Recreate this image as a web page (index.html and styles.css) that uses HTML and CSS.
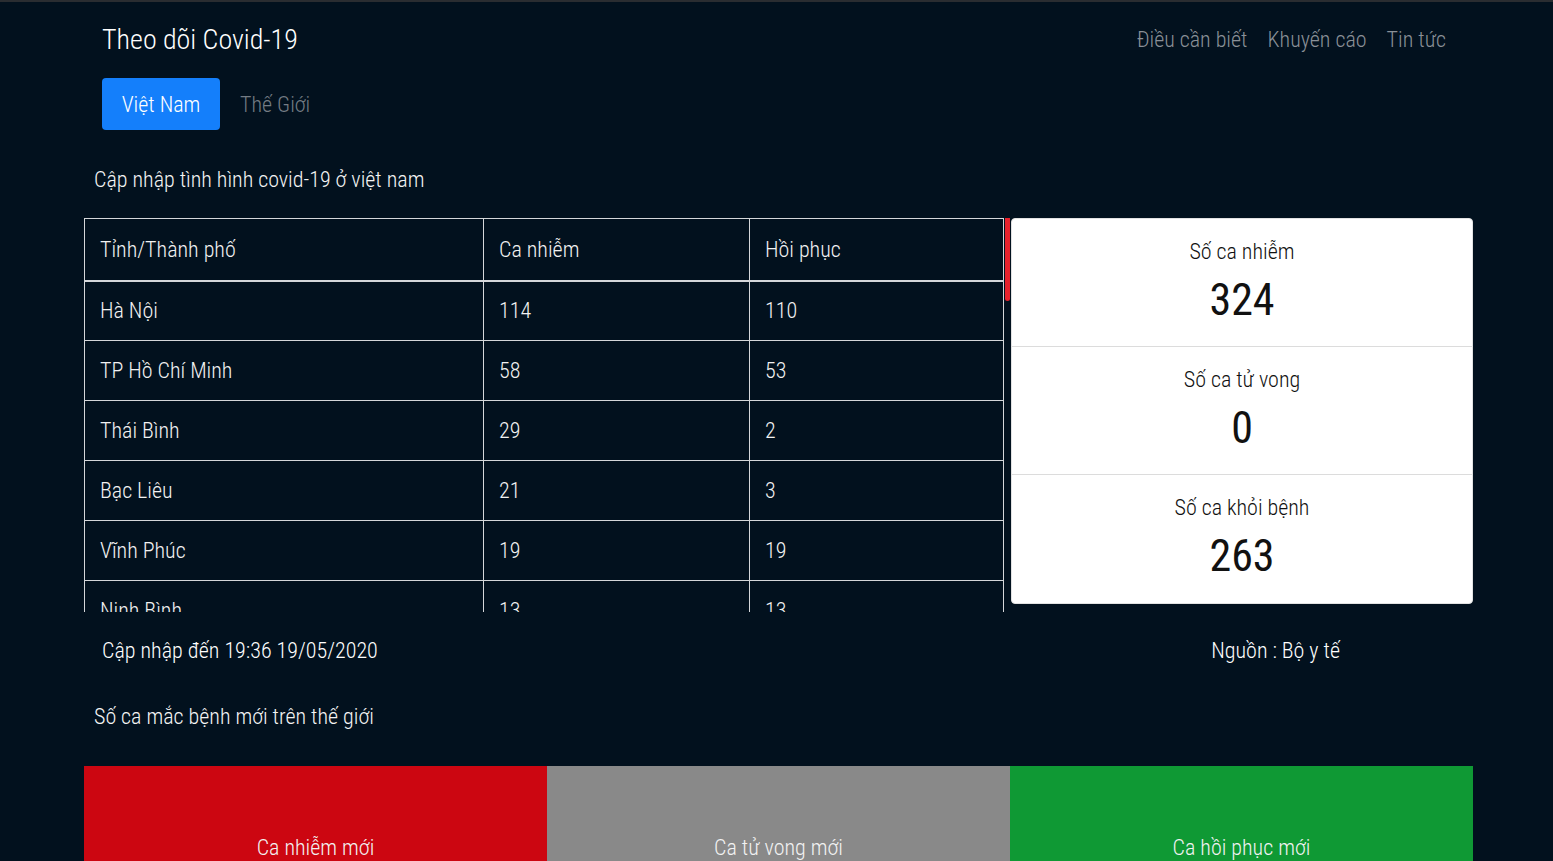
FILE: index.html
```html
<!DOCTYPE html>
<html lang="vi">
<head>
<meta charset="utf-8">
<title>Theo dõi Covid-19</title>
<link rel="stylesheet" href="styles.css">
</head>
<body>
<div class="topline"></div>
<div class="page">
  <header class="header">
    <div class="brand">Theo dõi Covid-19</div>
    <nav class="nav">
      <a class="nav-link" href="#">Điều cần biết</a>
      <a class="nav-link" href="#">Khuyến cáo</a>
      <a class="nav-link" href="#">Tin tức</a>
    </nav>
  </header>

  <div class="tabs">
    <a class="tab active" href="#">Việt Nam</a>
    <a class="tab" href="#">Thế Giới</a>
  </div>

  <h2 class="section-title">Cập nhập tình hình covid-19 ở việt nam</h2>

  <div class="row">
    <div class="table-col">
      <div class="table-wrap">
        <table class="cases">
          <thead>
            <tr><th class="c1">Tỉnh/Thành phố</th><th class="c2">Ca nhiễm</th><th class="c3">Hồi phục</th></tr>
          </thead>
          <tbody>
            <tr><td>Hà Nội</td><td>114</td><td>110</td></tr>
            <tr><td>TP Hồ Chí Minh</td><td>58</td><td>53</td></tr>
            <tr><td>Thái Bình</td><td>29</td><td>2</td></tr>
            <tr><td>Bạc Liêu</td><td>21</td><td>3</td></tr>
            <tr><td>Vĩnh Phúc</td><td>19</td><td>19</td></tr>
            <tr><td>Ninh Bình</td><td>13</td><td>13</td></tr>
            <tr><td>Bình Thuận</td><td>9</td><td>9</td></tr>
            <tr><td>Quảng Ninh</td><td>5</td><td>5</td></tr>
            <tr><td>Đà Nẵng</td><td>6</td><td>6</td></tr>
            <tr><td>Hà Nam</td><td>4</td><td>4</td></tr>
            <tr><td>Hà Tĩnh</td><td>4</td><td>4</td></tr>
            <tr><td>Đồng Tháp</td><td>3</td><td>3</td></tr>
            <tr><td>Thanh Hóa</td><td>3</td><td>3</td></tr>
            <tr><td>Quảng Nam</td><td>3</td><td>3</td></tr>
            <tr><td>Tây Ninh</td><td>2</td><td>2</td></tr>
            <tr><td>Ninh Thuận</td><td>2</td><td>2</td></tr>
            <tr><td>Lào Cai</td><td>2</td><td>2</td></tr>
            <tr><td>Khánh Hòa</td><td>2</td><td>2</td></tr>
            <tr><td>Bắc Giang</td><td>2</td><td>2</td></tr>
            <tr><td>Hải Dương</td><td>2</td><td>2</td></tr>
            <tr><td>Cần Thơ</td><td>2</td><td>2</td></tr>
            <tr><td>Hà Giang</td><td>1</td><td>1</td></tr>
            <tr><td>Thừa Thiên Huế</td><td>1</td><td>1</td></tr>
            <tr><td>Bến Tre</td><td>1</td><td>1</td></tr>
            <tr><td>Trà Vinh</td><td>1</td><td>1</td></tr>
            <tr><td>Đồng Nai</td><td>1</td><td>1</td></tr>
            <tr><td>Thái Nguyên</td><td>1</td><td>1</td></tr>
            <tr><td>Lai Châu</td><td>1</td><td>1</td></tr>
            <tr><td>Hưng Yên</td><td>1</td><td>1</td></tr>
            <tr><td>Bắc Ninh</td><td>1</td><td>1</td></tr>
          </tbody>
        </table>
      </div>
      <div class="scroll-thumb"></div>
    </div>

    <div class="stats">
      <div class="stat">
        <div class="stat-label">Số ca nhiễm</div>
        <div class="stat-value">324</div>
      </div>
      <div class="stat">
        <div class="stat-label">Số ca tử vong</div>
        <div class="stat-value">0</div>
      </div>
      <div class="stat">
        <div class="stat-label">Số ca khỏi bệnh</div>
        <div class="stat-value">263</div>
      </div>
    </div>
  </div>

  <div class="meta">
    <div class="updated">Cập nhập đến 19:36 19/05/2020</div>
    <div class="source">Nguồn : Bộ y tế</div>
  </div>

  <h2 class="section-title world">Số ca mắc bệnh mới trên thế giới</h2>

  <div class="boxes">
    <div class="box red"><div class="box-label">Ca nhiễm mới</div></div>
    <div class="box gray"><div class="box-label">Ca tử vong mới</div></div>
    <div class="box green"><div class="box-label">Ca hồi phục mới</div></div>
  </div>
</div>
</body>
</html>
```

FILE: styles.css
```css
* { box-sizing: border-box; }

html, body {
  margin: 0;
  padding: 0;
  background: #02111e;
}

body {
  font-family: "Roboto", "Liberation Sans", sans-serif;
  font-stretch: 86%;
  font-weight: 300;
  color: #f2f2f2;
}

.topline {
  height: 2px;
  background: #2a2d31;
}

.page {
  width: 1389px;
  margin-left: 84px;
  display: flex;
  flex-direction: column;
}

.header {
  display: flex;
  justify-content: space-between;
  align-items: center;
  padding: 0 27px 0 18px;
  height: 74px;
}

.brand {
  font-size: 28px;
  font-weight: 300;
  color: #ffffff;
}

.nav {
  display: flex;
  gap: 20px;
}

.nav-link {
  font-size: 22px;
  color: #8a9097;
  text-decoration: none;
}

.tabs {
  display: flex;
  align-items: center;
  gap: 20px;
  padding-left: 18px;
  margin-top: 2px;
}

.tab {
  font-size: 22px;
  color: #747c84;
  text-decoration: none;
  height: 52px;
  display: flex;
  align-items: center;
}

.tab.active {
  background: #147ffb;
  color: #ffffff;
  border-radius: 4px;
  width: 118px;
  justify-content: center;
}

.section-title {
  margin: 0;
  font-size: 22px;
  font-weight: 300;
  color: #f4f4f4;
  padding-left: 10px;
  height: 88px;
  display: flex;
  align-items: center;
  padding-top: 10px;
}

.row {
  display: flex;
  align-items: flex-start;
}

.table-col {
  position: relative;
  width: 926px;
}

.table-wrap {
  width: 926px;
  height: 394px;
  overflow-y: auto;
  scrollbar-width: none;
}

.table-wrap::-webkit-scrollbar {
  display: none;
}

.scroll-thumb {
  position: absolute;
  top: 0;
  right: 0;
  width: 5px;
  height: 83px;
  background: #e8222d;
  border-radius: 0 0 3px 3px;
}

.cases {
  width: 920px;
  border-collapse: collapse;
  font-size: 22px;
}

.cases th,
.cases td {
  border: 1px solid #d5d7da;
  text-align: left;
  font-weight: 300;
  padding: 0 15px;
  height: 60px;
}

.cases thead th {
  border-bottom: 2px solid #d5d7da;
  height: 62px;
}

.cases .c1 { width: 399px; }
.cases .c2 { width: 266px; }

.stats {
  width: 462px;
  margin-left: 1px;
  background: #ffffff;
  border: 1px solid #e2e2e2;
  border-radius: 4px;
  color: #111111;
  display: flex;
  flex-direction: column;
}

.stat {
  height: 128px;
  display: flex;
  flex-direction: column;
  align-items: center;
  padding-top: 20px;
  border-bottom: 1px solid #dcdcdc;
}

.stat:last-child {
  border-bottom: none;
}

.stat-label {
  font-size: 22px;
  font-weight: 300;
  line-height: 26px;
}

.stat-value {
  font-size: 44px;
  font-weight: 400;
  line-height: 52px;
  margin-top: 9px;
}

.meta {
  display: flex;
  justify-content: space-between;
  align-items: center;
  height: 76px;
  padding: 0 133px 0 18px;
}

.updated,
.source {
  font-size: 22px;
  font-weight: 340;
  color: #ffffff;
}

.section-title.world {
  height: 54px;
  padding-top: 0;
  margin-top: 1px;
}

.boxes {
  display: flex;
  margin-top: 23px;
}

.box {
  flex: 1;
  height: 160px;
  display: flex;
  justify-content: center;
  padding-top: 69px;
}

.box.red { background: #cc0611; }
.box.gray { background: #898989; }
.box.green { background: #0f9934; }

.box-label {
  font-size: 22px;
  font-weight: 300;
  color: #f2f2f2;
}
```
